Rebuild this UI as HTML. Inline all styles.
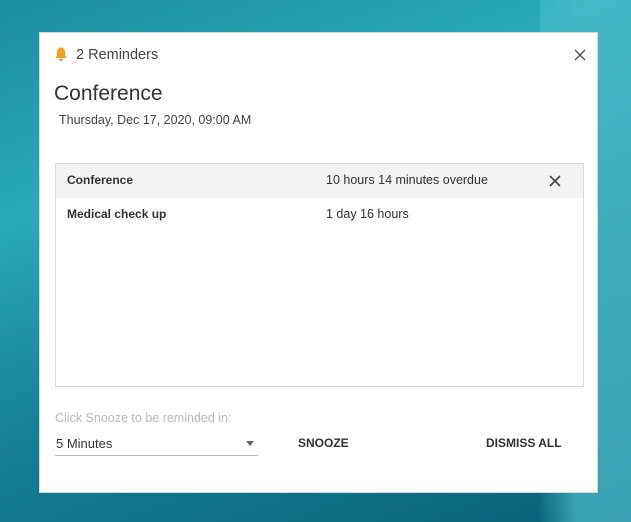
<!DOCTYPE html>
<html><head><style>
html,body{margin:0;padding:0}
body{width:631px;height:522px;overflow:hidden;position:relative;font-family:"Liberation Sans",sans-serif;
background:linear-gradient(160deg,#1c8ea0 0%,#2aa9b8 30%,#157f93 60%,#0d6e82 85%,#0a5f74 100%);}
.bg2{position:absolute;left:540px;top:0;width:91px;height:522px;background:linear-gradient(90deg,rgba(60,180,195,0),#4fbfcc 40%),linear-gradient(180deg,#3bb8c6,#7fcfd6 30%,#2a9fb0 55%,#0d6a7e);opacity:.7}
.dlg{position:absolute;left:39px;top:32px;width:559px;height:461px;background:#fff;border:1px solid #d8d8d8;box-sizing:border-box}
.t{position:absolute;color:#333;white-space:nowrap}
.list{position:absolute;left:15px;top:130px;width:529px;height:224px;border:1px solid #dcdcdc;box-sizing:border-box}
.row1{position:absolute;left:0;top:0;width:527px;height:34px;background:#f3f3f3}
</style></head><body>
<div class="bg2"></div>
<div class="dlg">
<svg style="position:absolute;left:15px;top:14px" width="12" height="14" viewBox="0 0 12 14"><path d="M6 0.5c-2.6 0-4 2-4 4.5v3.5L0.5 11h11L10 8.5V5c0-2.5-1.4-4.5-4-4.5z" fill="#f4a120"/><path d="M4 12h4a2 2 0 0 1-4 0z" fill="#f4a120"/></svg>
<div class="t" style="left:36px;top:14px;font-size:14.5px;color:#444">2 Reminders</div>
<svg style="position:absolute;left:534px;top:16px" width="12" height="12"><path d="M1 1L11 11M11 1L1 11" stroke="#555" stroke-width="1.4"/></svg>
<div class="t" style="left:14px;top:49px;font-size:21px;color:#333">Conference</div>
<div class="t" style="left:19px;top:80px;font-size:12.5px;color:#444">Thursday, Dec 17, 2020, 09:00 AM</div>
<div class="list">
<div class="row1"></div>
<div class="t" style="left:11px;top:9px;font-size:12px;font-weight:bold;color:#333">Conference</div>
<div class="t" style="left:270px;top:9px;font-size:12.5px;color:#333">10 hours 14 minutes overdue</div>
<svg style="position:absolute;left:493px;top:11px" width="12" height="12"><path d="M1 1L11 11M11 1L1 11" stroke="#444" stroke-width="1.6"/></svg>
<div class="t" style="left:11px;top:43px;font-size:12px;font-weight:bold;color:#333">Medical check up</div>
<div class="t" style="left:270px;top:43px;font-size:12.5px;color:#333">1 day 16 hours</div>
</div>
<div class="t" style="left:15px;top:378px;font-size:12.5px;color:#bbb">Click Snooze to be reminded in:</div>
<div class="t" style="left:16px;top:403px;font-size:13px;color:#333">5 Minutes</div>
<svg style="position:absolute;left:206px;top:408px" width="8" height="5"><path d="M0 0H8L4 5z" fill="#666"/></svg>
<div style="position:absolute;left:15px;top:422px;width:203px;height:1px;background:#bbb"></div>
<div class="t" style="left:258px;top:403px;font-size:12px;font-weight:bold;color:#333">SNOOZE</div>
<div class="t" style="left:446px;top:403px;font-size:12px;font-weight:bold;color:#333">DISMISS ALL</div>
</div>
</body></html>
